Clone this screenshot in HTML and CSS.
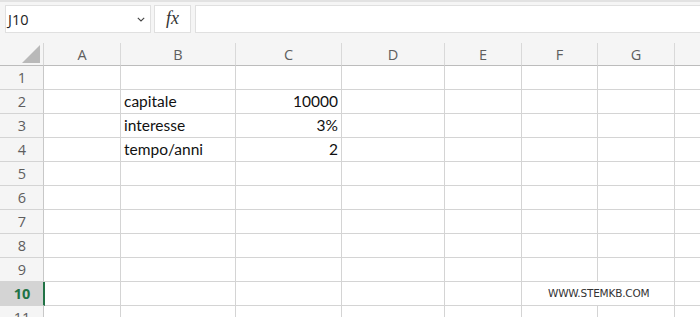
FILE: index.html
```html
<!DOCTYPE html>
<html>
<head>
<meta charset="utf-8">
<link rel="stylesheet" href="styles.css">
</head>
<body>
<div class="toolbar">
  <div class="namebox">
    <span class="nb-text">J10</span>
    <svg class="chev" width="8" height="5" viewBox="0 0 8 5"><path d="M0.8 0.8 L4 4 L7.2 0.8" fill="none" stroke="#444" stroke-width="1.1"/></svg>
  </div>
  <div class="fxbox"><span class="fx">fx</span></div>
  <div class="formula"></div>
</div>
<div class="sheet">
  <div class="corner"><span class="tri"></span></div>
  <div class="ch">A</div><div class="ch">B</div><div class="ch">C</div><div class="ch">D</div><div class="ch">E</div><div class="ch">F</div><div class="ch">G</div><div class="ch last"></div>

  <div class="rh">1</div><div class="c"></div><div class="c"></div><div class="c"></div><div class="c"></div><div class="c"></div><div class="c"></div><div class="c"></div><div class="c last"></div>
  <div class="rh">2</div><div class="c"></div><div class="c">capitale</div><div class="c num">10000</div><div class="c"></div><div class="c"></div><div class="c"></div><div class="c"></div><div class="c last"></div>
  <div class="rh">3</div><div class="c"></div><div class="c">interesse</div><div class="c num">3%</div><div class="c"></div><div class="c"></div><div class="c"></div><div class="c"></div><div class="c last"></div>
  <div class="rh">4</div><div class="c"></div><div class="c">tempo/anni</div><div class="c num">2</div><div class="c"></div><div class="c"></div><div class="c"></div><div class="c"></div><div class="c last"></div>
  <div class="rh">5</div><div class="c"></div><div class="c"></div><div class="c"></div><div class="c"></div><div class="c"></div><div class="c"></div><div class="c"></div><div class="c last"></div>
  <div class="rh">6</div><div class="c"></div><div class="c"></div><div class="c"></div><div class="c"></div><div class="c"></div><div class="c"></div><div class="c"></div><div class="c last"></div>
  <div class="rh">7</div><div class="c"></div><div class="c"></div><div class="c"></div><div class="c"></div><div class="c"></div><div class="c"></div><div class="c"></div><div class="c last"></div>
  <div class="rh">8</div><div class="c"></div><div class="c"></div><div class="c"></div><div class="c"></div><div class="c"></div><div class="c"></div><div class="c"></div><div class="c last"></div>
  <div class="rh">9</div><div class="c"></div><div class="c"></div><div class="c"></div><div class="c"></div><div class="c"></div><div class="c"></div><div class="c"></div><div class="c last"></div>
  <div class="rh sel">10</div><div class="c"></div><div class="c"></div><div class="c"></div><div class="c"></div><div class="c"></div><div class="c wide"><span class="mark">WWW.STEMKB.COM</span></div><div class="c last"></div>
  <div class="rh">11</div><div class="c"></div><div class="c"></div><div class="c"></div><div class="c"></div><div class="c"></div><div class="c"></div><div class="c"></div><div class="c last"></div>
</div>
</body>
</html>
```

FILE: styles.css
```css
html, body {
  margin: 0;
  padding: 0;
  background: #ffffff;
  overflow: hidden;
  height: 317px;
}

.toolbar {
  height: 43px;
  background: #f5f5f5;
  border-top: 2px solid #e2e2e2;
  display: flex;
  align-items: flex-start;
  padding: 3px 0 0 5px;
  box-sizing: border-box;
  gap: 3px;
}

.namebox {
  width: 146px;
  height: 28px;
  box-sizing: border-box;
  background: #fff;
  border: 1px solid #e0e0e0;
  display: flex;
  align-items: center;
  padding: 0 4px 0 2px;
  justify-content: space-between;
}

.nb-text {
  font-family: "Open Sans", sans-serif;
  font-size: 14.5px;
  color: #222;
}

.chev {
  margin-right: 1px;
}

.fxbox {
  width: 37px;
  height: 28px;
  box-sizing: border-box;
  background: #fff;
  border: 1px solid #e0e0e0;
  display: flex;
  align-items: center;
  justify-content: center;
}

.fx {
  font-family: "Liberation Serif", serif;
  font-style: italic;
  font-size: 18px;
  color: #333;
  margin-top: -2px;
}

.formula {
  flex: 1;
  height: 28px;
  box-sizing: border-box;
  background: #fff;
  border: 1px solid #e0e0e0;
  border-right: none;
  margin-left: 1px;
}

.sheet {
  display: grid;
  grid-template-columns: 44px 77px 115px 106px 103px 77px 76px 77px 1fr;
  grid-template-rows: 23px;
  grid-auto-rows: 24px;
}

.corner {
  background: #f5f5f5;
  border-right: 1px solid #d6d6d6;
  border-bottom: 1px solid #bcbcbc;
  display: flex;
  justify-content: flex-end;
  align-items: flex-end;
  padding: 0 3px 2px 0;
}

.tri {
  width: 18px;
  height: 18px;
  background: #b9b9b9;
  clip-path: polygon(100% 0, 100% 100%, 0 100%);
}

.ch {
  background: #f5f5f5;
  border-right: 1px solid #d9d9d9;
  border-bottom: 1px solid #bcbcbc;
  display: flex;
  align-items: center;
  justify-content: center;
  font-family: "Open Sans", sans-serif;
  font-size: 14.5px;
  color: #5e5e5e;
}

.ch.last {
  border-right: none;
}

.rh {
  background: #f5f5f5;
  border-right: 1px solid #c8c8c8;
  border-bottom: 1px solid #d4d4d4;
  display: flex;
  align-items: center;
  justify-content: center;
  font-family: "Open Sans", sans-serif;
  font-size: 14.5px;
  color: #5e5e5e;
  padding-left: 1px;
}

.rh.sel {
  background: #d4d4d4;
  color: #217346;
  font-weight: 700;
  border-right: 2px solid #217346;
  margin-right: -1px;
  position: relative;
  z-index: 1;
}

.c {
  border-right: 1px solid #d4d4d4;
  border-bottom: 1px solid #d4d4d4;
  font-family: "Lato", sans-serif;
  font-size: 15.5px;
  color: #111;
  display: flex;
  align-items: flex-end;
  padding: 0 3px 3px 3px;
  white-space: nowrap;
  box-sizing: border-box;
  line-height: 18px;
}

.c.num {
  justify-content: flex-end;
}

.c.last {
  border-right: none;
}

.c.wide {
  grid-column: span 2;
  padding-left: 26px;
  padding-bottom: 3px;
}

.mark {
  font-family: "DejaVu Sans", sans-serif;
  font-size: 10.5px;
  color: #333;
  letter-spacing: -0.2px;
}
```
